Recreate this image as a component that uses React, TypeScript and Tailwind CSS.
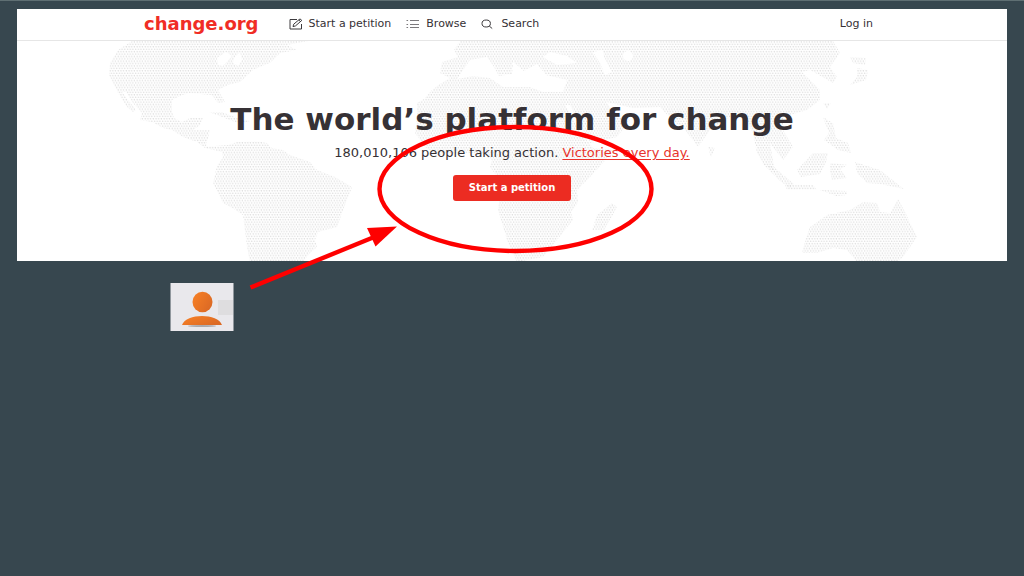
const LAND = [
  // Americas
  "132,41 118,50 110,63 109,75 118,93 127,107 133,112 136,110 122,92 126,92 133,103 142,113 140,120 152,122 163,128 172,130 183,137 197,142 205,148 222,152 223,157 217,166 213,183 223,203 234,209 243,215 247,247 250,262 303,262 310,253 317,247 315,240 318,232 337,227 343,210 352,187 335,177 317,170 310,162 290,155 283,150 272,148 267,143 255,141 237,142 228,145 215,146 206,146 210,130 193,130 200,125 203,118 190,118 182,122 174,118 172,112 172,100 182,95 190,93 200,94 212,95 218,103 225,102 218,90 228,85 240,82 253,70 262,66 270,63 280,53 297,50 287,45 308,41",
  "209,112 222,112 237,118 250,121 240,124 222,117",
  // Europe, Africa and Asia
  "460,41 454,50 458,57 442,62 440,73 450,78 440,84 432,90 424,99 417,103 417,118 415,133 425,147 437,155 458,153 480,153 492,160 490,167 502,183 498,210 507,240 517,262 543,257 557,240 573,220 571,212 578,203 577,190 590,177 603,163 613,150 593,148 577,127 565,105 570,105 590,143 617,137 630,120 618,116 610,107 606,102 633,108 660,107 672,120 685,130 698,147 710,130 730,117 743,115 753,133 757,153 763,163 775,172 770,143 783,160 793,147 783,130 783,117 807,110 820,100 820,90 807,77 802,72 810,70 833,83 837,77 830,67 840,53 833,41",
  // Madagascar, Sri Lanka
  "592,230 597,215 612,203 617,207 604,230",
  "708,147 715,148 711,157",
  // Taiwan, Philippines
  "823,103 831,103 827,109",
  "823,117 833,123 836,138 848,143 851,153 838,150 824,140 829,133",
  // Indonesia, New Guinea
  "762,163 774,167 794,184 790,188 780,181",
  "785,185 813,185 817,190 787,190",
  "820,190 847,191 847,195 836,196",
  "797,170 813,153 828,153 826,162 820,174 801,177",
  "830,163 848,165 840,169 847,178 832,180 830,171",
  "855,162 880,170 904,189 880,184 867,183 857,173",
  // Japan
  "850,57 866,58 865,65 853,63",
  "857,68 868,70 866,80 850,85 857,77",
  // Australia
  "802,253 806,238 810,227 827,215 850,210 863,202 877,203 880,212 890,213 898,199 905,212 917,237 903,257 897,262 857,262 847,250 833,248 817,253",
];

const WATER = [
  "457,79 470,60 487,57 494,67 499,76 512,74 513,62 524,71 537,64 546,75 567,80 563,92 543,92 530,87 503,87 490,78 473,76",
  "543,57 550,52 567,56 577,63 557,65",
  "593,52 603,50 604,57 612,72 605,75 600,63",
  "217,58 226,52 232,56 223,66 218,65",
  "234,58 240,52 242,60 238,66 233,63",
];

function WorldMap() {
  return (
    <svg
      aria-hidden="true"
      className="absolute left-1/2 top-0 -translate-x-1/2"
      width="990"
      height="220"
      viewBox="17 41 990 220"
    >
      <defs>
        <pattern id="dots" width="2.7" height="4.8" patternUnits="userSpaceOnUse">
          <circle cx="0.7" cy="1.2" r="0.66" fill="#d8d8d8" />
          <circle cx="2.05" cy="3.6" r="0.66" fill="#d8d8d8" />
        </pattern>
      </defs>
      {LAND.map((p) => (
        <polygon key={p} points={p} fill="url(#dots)" />
      ))}
      {WATER.map((p) => (
        <polygon key={p} points={p} fill="#fff" />
      ))}
      <circle cx="628" cy="56" r="5" fill="#fff" />
    </svg>
  );
}

function EditIcon() {
  return (
    <svg aria-hidden="true" width="14" height="12" viewBox="0 0 14 12" fill="none" stroke="#3c3a3d" strokeWidth="1">
      <path d="M8 1.5H1v9.5h11.5V6" />
      <path d="M4 8.6l.7-2.4L11 .9l1.8 1.5-6.3 5.5z M9.7 2l1.8 1.5" />
    </svg>
  );
}

function ListIcon() {
  return (
    <svg aria-hidden="true" width="14" height="12" viewBox="0 0 14 12" fill="none" stroke="#7c7a7d" strokeWidth="1">
      <path d="M4 2.5h9M4 6.5h9M4 9.500h9" />
      <path d="M.5 2.5h1.6M.5 6.5h1.6M.5 9.500h1.6" />
    </svg>
  );
}

function SearchIcon() {
  return (
    <svg aria-hidden="true" width="14" height="12" viewBox="0 0 14 12" fill="none" stroke="#3c3a3d" strokeWidth="1">
      <ellipse cx="5.2" cy="5.500" rx="4.2" ry="3.5" />
      <path d="M8.2 8l3 2.5" />
    </svg>
  );
}

function Callout() {
  return (
    <svg
      aria-hidden="true"
      className="pointer-events-none absolute left-1/2 top-0 -translate-x-1/2"
      width="1024"
      height="300"
      viewBox="0 0 1024 300"
    >
      <ellipse cx="515.500" cy="188" rx="136" ry="62" fill="none" stroke="#fe0000" strokeWidth="4.4" />
      <path d="M250.500 286.500L373 236.500" stroke="#fe0000" strokeWidth="4.400" />
      <path d="M367 227L397 225.500L375.500 245.500z" fill="#fe0000" />
    </svg>
  );
}

function Avatar() {
  return (
    <svg role="img" aria-label="User" width="64" height="48" viewBox="0 0 64 48">
      <defs>
        <linearGradient id="skin" x1="0" y1="0" x2="1" y2="0.6">
          <stop offset="0" stopColor="#f98125" />
          <stop offset="1" stopColor="#dc6a25" />
        </linearGradient>
      </defs>
      <rect x="0.500" width="63" height="48" fill="#e9e8ec" />
      <rect x="48" y="17" width="15" height="15" fill="#dedddf" />
      <ellipse cx="32" cy="43" rx="14" ry="1" fill="#aaa9ad" />
      <ellipse cx="32.500" cy="19" rx="10" ry="10.300" fill="url(#skin)" />
      <path d="M12 42C14 36 23 33 32 33s18 3 20 9z" fill="url(#skin)" />
    </svg>
  );
}

export default function App() {
  return (
    <div className="relative min-h-screen overflow-hidden border-t border-[#5f6f73] bg-[#37474f] font-['DejaVu_Sans',sans-serif] text-[#363135]">
      <div className="mx-[17px] mt-2 bg-white">
        <header className="border-b border-[#e6e6e6]">
          <div className="mx-auto flex h-[31px] max-w-[736px] items-center pb-[2px]">
            <a href="#home" className="text-[18px] leading-6 font-bold text-[#f02d25]">
              change.org
            </a>
            <nav className="ml-[30px] flex flex-1 items-center gap-[15px] text-[11px] leading-4">
              <a href="#start" className="flex items-center gap-[6px]">
                <EditIcon />
                Start a petition
              </a>
              <a href="#browse" className="flex items-center gap-[6px]">
                <ListIcon />
                Browse
              </a>
              <a href="#search" className="flex items-center gap-[6px]">
                <SearchIcon />
                Search
              </a>
              <a href="#login" className="ml-auto px-[7px]">
                Log in
              </a>
            </nav>
          </div>
        </header>
        <main className="relative">
          <WorldMap />
          <div className="relative flex flex-col items-center px-4 pt-[58px] pb-[60px] text-center">
            <h1 className="text-[31px] leading-10 font-bold">The world’s platform for change</h1>
            <p className="mt-1 text-[13px] leading-5">
              180,010,106 people taking action.{" "}
              <a href="#victories" className="text-[#e8342c] underline underline-offset-2">
                Victories every day.
              </a>
            </p>
            <button
              type="button"
              className="mt-3 h-[26px] rounded-[3px] bg-[#ec2c22] px-4 text-[10px] leading-4 font-bold text-white"
            >
              Start a petition
            </button>
          </div>
        </main>
      </div>
      <div className="mx-auto mt-[22px] max-w-[736px] pl-[26px]">
        <Avatar />
      </div>
      <Callout />
    </div>
  );
}
